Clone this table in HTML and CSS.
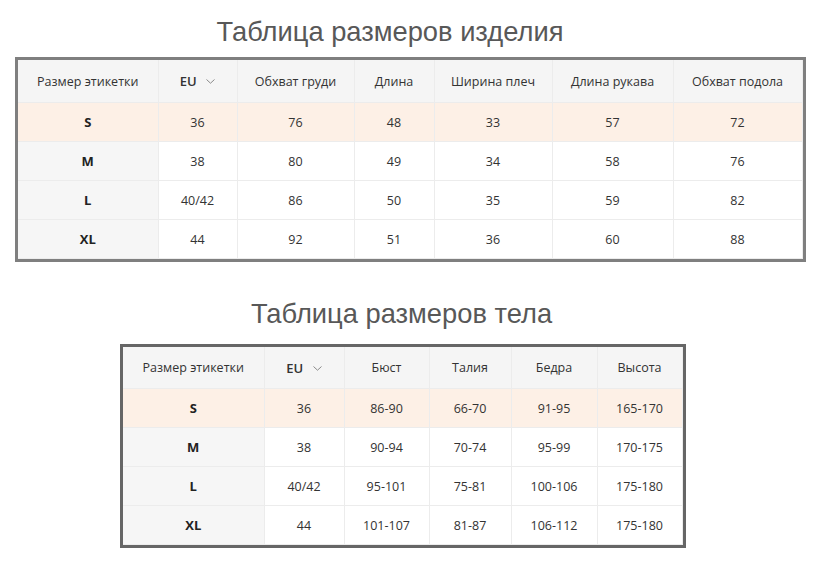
FILE: index.html
```html
<!DOCTYPE html>
<html lang="ru">
<head>
<meta charset="utf-8">
<title>Таблицы размеров</title>
<link rel="stylesheet" href="styles.css">
</head>
<body>
<section class="block block-product">
  <h2 class="title title-product">Таблица размеров изделия</h2>
  <div class="box box-product">
    <table class="sizes">
      <colgroup>
        <col style="width:140px"><col style="width:79px"><col style="width:117px"><col style="width:80px"><col style="width:118px"><col style="width:121px"><col style="width:129px">
      </colgroup>
      <thead>
        <tr>
          <th class="label-col">Размер этикетки</th>
          <th class="eu">EU <svg class="chev" width="9" height="5" viewBox="0 0 9 5"><path d="M0.5 0.5 L4.5 4.2 L8.5 0.5" fill="none" stroke="#8a8a8a" stroke-width="1"/></svg></th>
          <th>Обхват груди</th>
          <th>Длина</th>
          <th>Ширина плеч</th>
          <th>Длина рукава</th>
          <th>Обхват подола</th>
        </tr>
      </thead>
      <tbody>
        <tr class="active"><td class="label-col">S</td><td>36</td><td>76</td><td>48</td><td>33</td><td>57</td><td>72</td></tr>
        <tr><td class="label-col">M</td><td>38</td><td>80</td><td>49</td><td>34</td><td>58</td><td>76</td></tr>
        <tr><td class="label-col">L</td><td>40/42</td><td>86</td><td>50</td><td>35</td><td>59</td><td>82</td></tr>
        <tr><td class="label-col">XL</td><td>44</td><td>92</td><td>51</td><td>36</td><td>60</td><td>88</td></tr>
      </tbody>
    </table>
  </div>
</section>
<section class="block block-body">
  <h2 class="title title-body">Таблица размеров тела</h2>
  <div class="box box-body">
    <table class="sizes sizes-body">
      <colgroup>
        <col style="width:141px"><col style="width:80px"><col style="width:85px"><col style="width:82px"><col style="width:86px"><col style="width:85px">
      </colgroup>
      <thead>
        <tr>
          <th class="label-col">Размер этикетки</th>
          <th class="eu">EU <svg class="chev" width="9" height="5" viewBox="0 0 9 5"><path d="M0.5 0.5 L4.5 4.2 L8.5 0.5" fill="none" stroke="#8a8a8a" stroke-width="1"/></svg></th>
          <th>Бюст</th>
          <th>Талия</th>
          <th>Бедра</th>
          <th>Высота</th>
        </tr>
      </thead>
      <tbody>
        <tr class="active"><td class="label-col">S</td><td>36</td><td>86-90</td><td>66-70</td><td>91-95</td><td>165-170</td></tr>
        <tr><td class="label-col">M</td><td>38</td><td>90-94</td><td>70-74</td><td>95-99</td><td>170-175</td></tr>
        <tr><td class="label-col">L</td><td>40/42</td><td>95-101</td><td>75-81</td><td>100-106</td><td>175-180</td></tr>
        <tr><td class="label-col">XL</td><td>44</td><td>101-107</td><td>81-87</td><td>106-112</td><td>175-180</td></tr>
      </tbody>
    </table>
  </div>
</section>
</body>
</html>
```

FILE: styles.css
```css
html, body {
  margin: 0;
  padding: 0;
  background: #ffffff;
}

body {
  width: 823px;
  font-family: "Open Sans", "Noto Sans", sans-serif;
  color: #333333;
}

.block {
  display: flex;
  flex-direction: column;
}

.title {
  margin: 0;
  font-family: "Liberation Sans", Arial, sans-serif;
  font-weight: normal;
  font-size: 27.3px;
  line-height: 32px;
  color: #585858;
  text-align: center;
}

.title-product {
  padding-top: 16px;
  padding-right: 43px;
  margin-bottom: 9px;
}

.title-body {
  margin-top: 36px;
  padding-right: 20px;
  margin-bottom: 14px;
}

.box {
  align-self: flex-start;
  border: 3px solid #7f7f7f;
}

.box-product {
  margin-left: 15px;
}

.box-body {
  margin-left: 120px;
  border-color: #666666;
}

.sizes {
  border-collapse: collapse;
  table-layout: fixed;
}

.sizes th,
.sizes td {
  padding: 0;
  text-align: center;
  vertical-align: middle;
  font-size: 12.5px;
  font-weight: normal;
  color: #333333;
  border-right: 1px solid #ececec;
  border-bottom: 1px solid #ececec;
  white-space: nowrap;
}

.sizes thead th {
  height: 42px;
  background: #f5f5f5;
}

.sizes-body thead th {
  height: 41px;
}

.sizes tbody td {
  height: 38px;
  background: #ffffff;
}

.sizes tbody td.label-col {
  background: #f6f6f6;
  font-weight: bold;
  font-size: 13px;
  color: #222222;
}

.sizes tbody tr.active td,
.sizes tbody tr.active td.label-col {
  background: #fdf0e6;
}

.eu {
  font-weight: 600 !important;
  font-size: 13px !important;
}

.chev {
  margin-left: 6px;
  vertical-align: 2px;
}
```
